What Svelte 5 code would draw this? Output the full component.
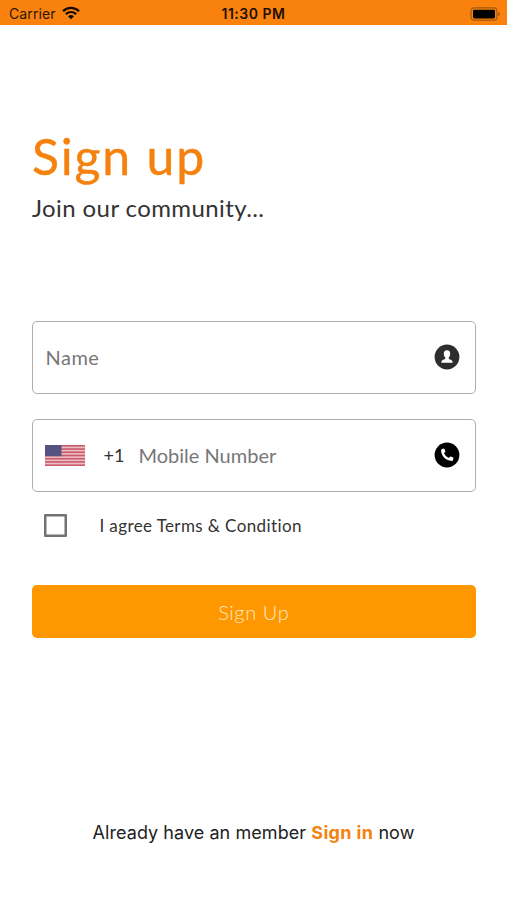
<script lang="ts">
	let name = $state('');
	let mobile = $state('');
	let agreed = $state(false);

	const stripes = [0, 1, 2, 3, 4, 5, 6];

	function signUp(event: Event) {
		event.preventDefault();
	}
</script>

<div class="screen">
	<div class="status-bar">
		<div class="carrier">
			<span>Carrier</span>
			<svg width="18" height="14" viewBox="0 0 18 14" fill="none" stroke="#170b00">
				<path d="M1 5.2C5.5 .8 12.5 .8 17 5.2" stroke-width="2.3" />
				<path d="M3.8 8.1C6.8 5.3 11.2 5.3 14.2 8.1" stroke-width="2.2" />
				<path d="M6 10.2C7.8 8.7 10.2 8.7 12 10.2L9 13.2Z" fill="#170b00" stroke="none" />
			</svg>
		</div>
		<span class="time">11:30 PM</span>
		<svg class="battery" width="32" height="14" viewBox="0 0 32 14">
			<rect x="2" y=".8" width="26" height="12.4" rx="3.2" fill="none" stroke="#a6570c" stroke-width="1.2" />
			<rect x="4" y="2.8" width="22" height="8.6" rx="1.4" fill="#000" />
			<path d="M29.4 4.8C31.6 5.8 31.6 8.2 29.4 9.2Z" fill="#a6570c" />
		</svg>
	</div>

	<header>
		<h1>Sign up</h1>
		<p>Join our community...</p>
	</header>

	<form onsubmit={signUp}>
		<label class="field">
			<input class="name" type="text" placeholder="Name" bind:value={name} />
			<svg width="26" height="26" viewBox="0 0 26 26">
				<circle cx="13" cy="13" r="12.4" fill="#2d2d2d" />
				<path
					d="M13 6.3C15.2 6.3 16.4 7.9 16.2 10.1C16.1 11.9 15.5 12.8 14.8 13.6V15C16.7 15.7 18.5 16 18.7 18.8H7.3C7.5 16 9.3 15.7 11.2 15V13.6C10.5 12.8 9.9 11.9 9.8 10.1C9.6 7.9 10.8 6.3 13 6.3Z"
					fill="#fff"
				/>
			</svg>
		</label>

		<label class="field">
			<svg class="flag" width="40" height="21" viewBox="0 0 40 21">
				<rect width="40" height="21" fill="#eebdc4" />
				{#each stripes as i}
					<rect y={i * 3.23} width="40" height="1.62" fill="#c95c6c" />
				{/each}
				<rect width="16.5" height="11.2" fill="#55537f" />
			</svg>
			<span class="code">+1</span>
			<input class="mobile" type="tel" placeholder="Mobile Number" bind:value={mobile} />
			<svg width="26" height="26" viewBox="0 0 26 26">
				<circle cx="13" cy="13" r="12.4" fill="#000" />
				<path
					d="M8.4 6.9L9.7 6.6Q10.2 6.5 10.4 7L11.3 9.2Q11.5 9.7 11.1 10.1L9.9 11.2Q11.3 14.2 14.8 16.1L16 14.8Q16.4 14.4 16.9 14.6L19.1 15.6Q19.6 15.8 19.4 16.4L18.9 18.3Q18.7 19 18 19C11.7 18.6 7.2 14.1 7 8.3Q7 7.2 8.4 6.9Z"
					fill="#fff"
				/>
			</svg>
		</label>

		<label class="terms">
			<input type="checkbox" bind:checked={agreed} />
			<span>I agree Terms &amp; Condition</span>
		</label>

		<button type="submit">Sign Up</button>
	</form>

	<footer>Already have an member <strong>Sign in</strong> now</footer>
</div>

<style>
	:global(body) {
		margin: 0;
		background: #fff;
	}

	.screen {
		display: flex;
		flex-direction: column;
		box-sizing: border-box;
		height: 900px;
		font-family: Lato, 'Open Sans', sans-serif;
		color: #333;
	}

	.status-bar {
		display: grid;
		grid-template-columns: 1fr auto 1fr;
		align-items: center;
		height: 25px;
		padding: 2px 6px 0 9px;
		box-sizing: border-box;
		background: #f9820f;
		color: #2b1601;
		font: 14px/24px Inter, sans-serif;
	}

	.carrier {
		display: flex;
		align-items: center;
		gap: 6px;
		letter-spacing: 0.1px;
	}

	.carrier svg {
		margin-top: -2px;
	}

	.time {
		margin-left: -3px;
		font-weight: 600;
		letter-spacing: 0.5px;
		color: #1e0f00;
	}

	.battery {
		justify-self: end;
		margin-top: -1px;
	}

	header {
		padding: 101px 32px 0;
	}

	h1 {
		margin: 0;
		font-size: 50px;
		line-height: 60px;
		font-weight: 400;
		letter-spacing: 1.8px;
		color: #f5820f;
		-webkit-text-stroke: 0.4px #f5820f;
	}

	header p {
		margin: 7px 0 0;
		font-size: 24px;
		line-height: 30px;
		letter-spacing: 0.4px;
	}

	form {
		display: flex;
		flex-direction: column;
		padding: 98px 31px 0 31.5px;
	}

	.field {
		display: flex;
		align-items: center;
		box-sizing: border-box;
		height: 73px;
		margin-bottom: 25px;
		padding: 0 15px 1px 12px;
		border: 1.5px solid #adadad;
		border-radius: 5px;
	}

	.field input {
		flex: 1;
		min-width: 0;
		padding: 0;
		border: 0;
		outline: none;
		background: none;
		font: 20px/28px Lato, sans-serif;
		color: #333;
	}

	.field input::placeholder {
		color: #777;
		opacity: 1;
	}

	.field .name {
		margin-left: 1px;
		letter-spacing: 0.5px;
	}

	.code {
		width: 35px;
		margin-left: 19px;
		font-size: 18px;
	}

	.terms {
		display: flex;
		align-items: center;
		height: 24px;
		margin-top: -4px;
		padding-left: 12.4px;
		font-size: 17px;
		letter-spacing: 0.4px;
	}

	.terms input {
		appearance: none;
		box-sizing: border-box;
		width: 23px;
		height: 23px;
		margin: 0 32.5px 0 0;
		border: 2.5px solid #737373;
		border-radius: 1px;
		box-shadow: inset 0 0 0 0.5px #737373;
	}

	.terms input:checked {
		background: #f5820f;
	}

	button {
		height: 53px;
		margin-top: 48px;
		padding: 0;
		border: 0;
		border-radius: 5px;
		background: #ff9800;
		color: #ffe9c2;
		font: 300 20px Lato, sans-serif;
		letter-spacing: 0.6px;
	}

	footer {
		margin-top: auto;
		padding-bottom: 55px;
		font: 18px/24px Inter, sans-serif;
		letter-spacing: 0.06px;
		text-align: center;
		color: #222;
	}

	strong {
		font-weight: 700;
		letter-spacing: 0.35px;
		color: #f5820f;
	}
</style>
